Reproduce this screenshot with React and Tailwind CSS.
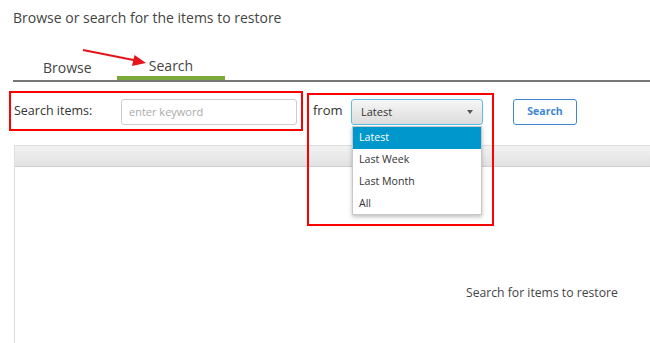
export default function App() {
  const font = { fontFamily: '"Open Sans", "Noto Sans", sans-serif' };
  return (
    <div className="relative w-[650px] h-[343px] overflow-hidden bg-white text-[#444]" style={font}>
      <div className="pl-[13px] pt-[8px] h-[28px] text-[14px] leading-[20px] text-[#444]">
        Browse or search for the items to restore
      </div>
      {/* Tabs */}
      <div className="ml-[13px] mt-[24px] flex items-end border-b-2 border-[#777] h-[30px]">
        <div className="w-[104px] h-[24px] text-[14px] leading-[20px] text-[#444] pt-[2px] pl-[30px]">Browse</div>
        <div className="w-[108px] h-[28px] flex flex-col justify-end">
          <div className="text-[14px] leading-[20px] text-center text-[#444] h-[20px]">Search</div>
          <div className="h-[4px] bg-[#7aa83a]"></div>
        </div>
      </div>
      {/* Search row */}
      <div className="mt-[17px] flex items-center h-[26px]">
        <div className="pl-[14px] w-[121px] text-[12.5px] leading-[18px] text-[#333] -mt-[2px]">Search items:</div>
        <div className="w-[176px] h-[26px] border border-[#ccc] rounded-[3px] flex items-center pl-[7px] text-[11px] text-[#aaa]">
          enter keyword
        </div>
        <div className="ml-[16px] w-[38px] text-[13px] leading-[18px] text-[#333] -mt-[4px]">from</div>
        <div className="w-[132px] h-[26px] border border-[#5bc0de] rounded-[3px] bg-gradient-to-b from-[#f6f6f6] to-[#dcdcdc] flex items-center justify-between pl-[9px] pr-[9px] text-[11px] text-[#333]">
          <span>Latest</span>
          <span className="w-0 h-0 border-l-[3.5px] border-r-[3.5px] border-t-[4px] border-l-transparent border-r-transparent border-t-[#555]"></span>
        </div>
        <div className="ml-[30px] w-[64px] h-[26px] border-[1.5px] border-[#3d86d3] rounded-[3px] flex items-center justify-center text-[10.5px] font-bold text-[#3d86d3]">
          Search
        </div>
      </div>
      {/* Panel */}
      <div className="ml-[14px] mt-[20px] w-[1060px] h-[220px] border border-[#ddd]">
        <div className="h-[21px] bg-gradient-to-b from-[#f2f2f2] to-[#e2e2e2] border-b border-[#cfcfcf]"></div>
        <div className="pl-[451px] pt-[117px] text-[12.2px] leading-[18px] text-[#444]">Search for items to restore</div>
      </div>

      {/* Dropdown */}
      <div className="absolute left-[352px] top-[126px] w-[130px] h-[89px] bg-white border border-[#c8c8c8] shadow-[0_2px_4px_rgba(0,0,0,0.25)] text-[10.6px] text-[#333]">
        <div className="h-[22px] bg-[#0097cc] text-white flex items-center pl-[6px]">Latest</div>
        <div className="h-[22px] flex items-center pl-[6px]">Last Week</div>
        <div className="h-[22px] flex items-center pl-[6px]">Last Month</div>
        <div className="h-[22px] flex items-center pl-[6px]">All</div>
      </div>

      {/* Annotations */}
      <div className="absolute left-[9px] top-[91px] w-[294px] h-[40px] border-2 border-[#f00]"></div>
      <div className="absolute left-[307px] top-[93px] w-[187px] h-[133px] border-2 border-[#f00]"></div>
      <svg className="absolute left-0 top-0" width="650" height="343" viewBox="0 0 650 343">
        <line x1="83" y1="50" x2="136" y2="60.5" stroke="#e8141b" strokeWidth="2.2" />
        <polygon points="146,63 132,66 134.5,55" fill="#e8141b" />
      </svg>
    </div>
  );
}
